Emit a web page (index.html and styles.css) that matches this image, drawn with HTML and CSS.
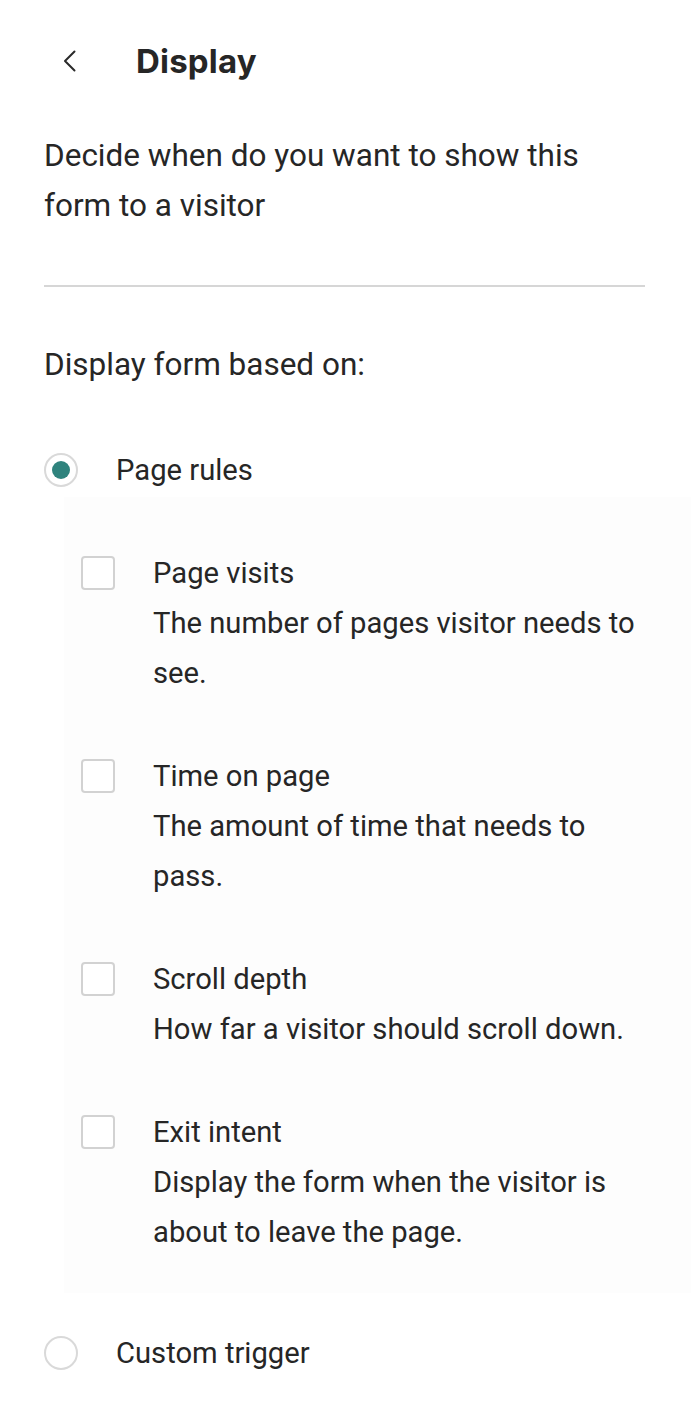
FILE: index.html
```html
<!DOCTYPE html>
<html lang="en">
<head>
<meta charset="utf-8">
<title>Display</title>
<link rel="stylesheet" href="styles.css">
</head>
<body>
<div class="page">
  <header class="header">
    <button class="back" aria-label="Back">
      <svg width="14" height="22" viewBox="0 0 14 22"><polyline points="11.5,1.5 2,11 11.5,20.5" fill="none" stroke="#2a2a2a" stroke-width="2" stroke-linecap="round" stroke-linejoin="round"/></svg>
    </button>
    <h1 class="title">Display</h1>
  </header>

  <p class="intro">Decide when do you want to show this form to a visitor</p>

  <hr class="divider">

  <p class="based">Display form based on:</p>

  <div class="radio-row">
    <span class="radio checked"><span class="dot"></span></span>
    <span class="radio-label">Page rules</span>
  </div>

  <div class="panel">
    <div class="option">
      <span class="checkbox"></span>
      <div class="option-text">
        <div class="option-title">Page visits</div>
        <div class="option-desc">The number of pages visitor needs to see.</div>
      </div>
    </div>
    <div class="option">
      <span class="checkbox"></span>
      <div class="option-text">
        <div class="option-title">Time on page</div>
        <div class="option-desc">The amount of time that needs to pass.</div>
      </div>
    </div>
    <div class="option">
      <span class="checkbox"></span>
      <div class="option-text">
        <div class="option-title">Scroll depth</div>
        <div class="option-desc">How far a visitor should scroll down.</div>
      </div>
    </div>
    <div class="option">
      <span class="checkbox"></span>
      <div class="option-text">
        <div class="option-title">Exit intent</div>
        <div class="option-desc">Display the form when the visitor is about to leave the page.</div>
      </div>
    </div>
  </div>

  <div class="radio-row custom">
    <span class="radio"></span>
    <span class="radio-label">Custom trigger</span>
  </div>
</div>
</body>
</html>
```

FILE: styles.css
```css
html, body {
  margin: 0;
  padding: 0;
  background: #ffffff;
}

body {
  font-family: Roboto, "Liberation Sans", Arial, sans-serif;
  color: #262626;
  font-size: 29.2px;
  line-height: 50px;
}

.page {
  padding: 0 46px 40px 44px;
}

.header {
  display: flex;
  align-items: center;
  padding-top: 40px;
  height: 42px;
}

.back {
  display: flex;
  align-items: center;
  justify-content: center;
  width: 14px;
  height: 22px;
  padding: 0;
  margin: 0 0 0 19px;
  border: 0;
  background: none;
}

.title {
  margin: 0 0 0 59px;
  font-family: Inter, "Noto Sans", sans-serif;
  font-weight: 700;
  font-size: 33px;
  line-height: 42px;
  color: #262626;
  letter-spacing: 0.2px;
}

.intro {
  margin: 49px 0 0;
  font-size: 31.5px;
}

.divider {
  margin: 54px 0 0;
  border: 0;
  height: 2px;
  background: #d6d6d6;
}

.based {
  margin: 53px 0 0;
  font-size: 31.5px;
}

.radio-row {
  display: flex;
  align-items: center;
  gap: 38px;
  margin-top: 55px;
  height: 50px;
}

.radio {
  box-sizing: border-box;
  width: 34px;
  height: 34px;
  border: 2px solid #d9d9d9;
  border-radius: 50%;
  display: flex;
  align-items: center;
  justify-content: center;
  flex: none;
  background: #fff;
}

.dot {
  width: 18px;
  height: 18px;
  border-radius: 50%;
  background: #2f837d;
}

.panel {
  margin: 2px -46px 0 20px;
  padding: 51px 40px 36px 17px;
  background: #fdfdfd;
}

.option {
  display: flex;
  gap: 38px;
}

.option + .option {
  margin-top: 53px;
}

.checkbox {
  box-sizing: border-box;
  flex: none;
  width: 34px;
  height: 34px;
  margin-top: 8px;
  border: 2px solid #d2d2d2;
  border-radius: 4px;
  background: #fff;
}

.option-text {
  max-width: 492px;
}

.radio-row.custom {
  margin-top: 35px;
}
```
